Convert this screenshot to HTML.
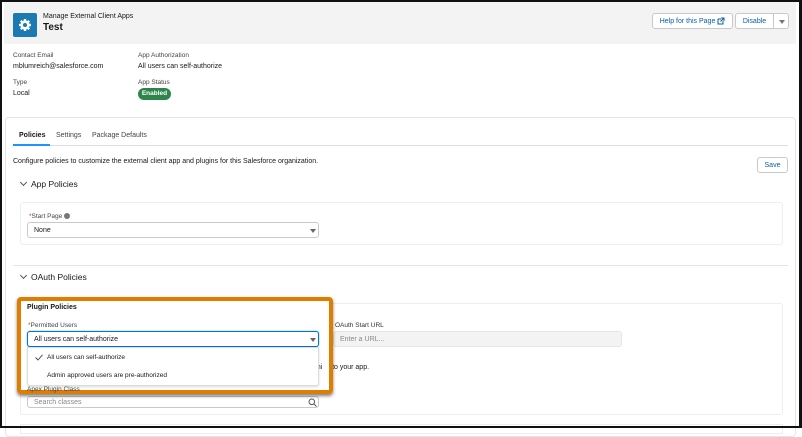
<!DOCTYPE html>
<html><head><style>
*{box-sizing:border-box;margin:0;padding:0}
body{width:802px;height:428px;overflow:hidden;background:#fff;font-family:"Liberation Sans",sans-serif;color:#181818;position:relative}
.a{position:absolute;white-space:nowrap}
.s{font-size:7px}
.lbl{font-size:6.5px;color:#444}
.frame{position:absolute;left:0;top:0;width:802px;height:428px;border:2px solid #111;border-right-width:3px;border-bottom-width:2px;pointer-events:none}
.btn{position:absolute;border:1px solid #c9c9c9;border-radius:3px;background:#fff;color:#0b5cab;font-size:7px;display:flex;align-items:center;justify-content:center}
.inp{position:absolute;border:1px solid #c9c9c9;border-radius:3px;background:#fff;font-size:7px;padding-left:6px;display:flex;align-items:center}
.tri{position:absolute;width:0;height:0;border-left:3px solid transparent;border-right:3px solid transparent;border-top:4px solid #666}
.chev{position:absolute;width:5px;height:5px;border-right:1px solid #555;border-bottom:1px solid #555;transform:rotate(45deg)}
</style></head><body>
<div class="a" style="left:4px;top:0;width:792px;height:44px;background:#f3f3f3"></div>
<div class="a" style="left:13px;top:13px;width:24px;height:24px;background:#1c7ab2;border-radius:2px"></div>
<svg class="a" style="left:17px;top:17px" width="16" height="16" viewBox="0 0 16 16"><g fill="#fff"><circle cx="8" cy="8" r="4.6"/><g stroke="#fff" stroke-width="2.4"><line x1="8" y1="2" x2="8" y2="14"/><line x1="2" y1="8" x2="14" y2="8"/><line x1="3.8" y1="3.8" x2="12.2" y2="12.2"/><line x1="12.2" y1="3.8" x2="3.8" y2="12.2"/></g></g><circle cx="8" cy="8" r="2" fill="#1c7ab2"/></svg>
<div class="a" style="left:43px;top:13px;font-size:7px">Manage External Client Apps</div>
<div class="a" style="left:43px;top:22px;font-size:10px;font-weight:bold">Test</div>
<div class="btn" style="left:652px;top:13px;width:81px;height:16px">Help for this Page&nbsp;<svg width="8" height="8" viewBox="0 0 8 8"><path d="M1 2h3M1 2v5h5V4M4 1h3v3M7 1L3.5 4.5" stroke="#0b5cab" fill="none" stroke-width="1"/></svg></div>
<div class="btn" style="left:735px;top:13px;width:39px;height:16px;border-radius:3px 0 0 3px">Disable</div>
<div class="btn" style="left:773px;top:13px;width:16px;height:16px;border-radius:0 3px 3px 0"><div class="tri" style="left:5px;top:6px;border-top-color:#777"></div></div>
<div class="a lbl" style="left:13px;top:52px">Contact Email</div>
<div class="a s" style="left:13px;top:63px">mblumreich@salesforce.com</div>
<div class="a lbl" style="left:138px;top:52px">App Authorization</div>
<div class="a s" style="left:138px;top:63px">All users can self-authorize</div>
<div class="a lbl" style="left:13px;top:79px">Type</div>
<div class="a s" style="left:13px;top:90px">Local</div>
<div class="a lbl" style="left:138px;top:79px">App Status</div>
<div class="a" style="left:138px;top:88px;width:33px;height:12px;background:#2e844a;border-radius:6px;color:#fff;font-size:6.5px;font-weight:bold;text-align:center;line-height:12px">Enabled</div>
<div class="a" style="left:5px;top:117px;width:791px;height:320px;border:1px solid #e5e5e5;border-radius:4px"></div>
<div class="a s" style="left:19px;top:132px;font-weight:bold">Policies</div>
<div class="a s" style="left:56px;top:132px;color:#444">Settings</div>
<div class="a s" style="left:92px;top:132px;color:#444">Package Defaults</div>
<div class="a" style="left:13px;top:145px;width:775px;height:1px;background:#ddd"></div>
<div class="a" style="left:13px;top:144px;width:37px;height:2px;background:#1b96ff"></div>
<div class="a s" style="left:13px;top:158px">Configure policies to customize the external client app and plugins for this Salesforce organization.</div>
<div class="btn" style="left:757px;top:157px;width:31px;height:16px">Save</div>
<div class="chev" style="left:21px;top:180px"></div>
<div class="a" style="left:31px;top:179px;font-size:8.5px">App Policies</div>
<div class="a" style="left:20px;top:202px;width:763px;height:43px;border:1px solid #eee;border-radius:3px"></div>
<div class="a lbl" style="left:29px;top:213px"><span style="color:#c23934">*</span>Start Page <span style="display:inline-block;width:6px;height:6px;border-radius:50%;background:#777;vertical-align:middle"></span></div>
<div class="inp" style="left:27px;top:222px;width:292px;height:16px">None<div class="tri" style="left:282px;top:6px"></div></div>
<div class="a" style="left:13px;top:265px;width:775px;height:1px;background:#e5e5e5"></div>
<div class="chev" style="left:21px;top:273px"></div>
<div class="a" style="left:31px;top:272px;font-size:8.5px">OAuth Policies</div>
<div class="a" style="left:20px;top:303px;width:763px;height:112px;border:1px solid #eee;border-radius:3px"></div>
<div class="a lbl" style="left:335px;top:322px;color:#333">OAuth Start URL</div>
<div class="inp" style="left:333px;top:331px;width:289px;height:16px;background:#f3f3f3;border-color:#e5e5e5;color:#888">Enter a URL...</div>
<div class="a s" style="left:313px;top:364px">gning to your app.</div>
<div class="a lbl" style="left:27px;top:386px">Apex Plugin Class</div>
<div class="inp" style="left:27px;top:396px;width:292px;height:12px;color:#888">Search classes<svg style="position:absolute;left:280px;top:1px" width="9" height="9" viewBox="0 0 9 9"><circle cx="3.8" cy="3.8" r="2.8" stroke="#555" fill="none"/><line x1="6" y1="6" x2="8.5" y2="8.5" stroke="#555"/></svg></div>
<div class="a" style="left:20px;top:424px;width:763px;height:10px;border:1px solid #eee"></div>
<div class="a" style="left:21px;top:301px;width:308px;height:89px;background:#fff"></div>
<div class="a s" style="left:313px;top:364px">gni</div>
<div class="a" style="left:17px;top:297px;width:316px;height:97px;border:4px solid #e07c00;border-radius:4px;box-shadow:0 2px 3px rgba(0,0,0,.5)"></div>
<div class="a s" style="left:27px;top:304px;font-weight:bold">Plugin Policies</div>
<div class="a lbl" style="left:28px;top:322px"><span style="color:#c23934">*</span>Permitted Users</div>
<div class="inp" style="left:27px;top:331px;width:292px;height:16px;border-color:#0176d3;box-shadow:0 0 1px #0176d3">All users can self-authorize<div class="tri" style="left:282px;top:6px"></div></div>
<div class="a lbl" style="left:27px;top:386px">Apex Plugin Class</div>
<div class="a" style="left:27px;top:347px;width:292px;height:39px;border:1px solid #ddd;border-radius:0 0 3px 3px;background:#fff;box-shadow:0 1px 2px rgba(0,0,0,.15)"></div>
<svg class="a" style="left:35px;top:354px" width="8" height="7" viewBox="0 0 8 7"><path d="M0.5 3.5L3 6L7.5 0.8" stroke="#444" fill="none" stroke-width="0.9"/></svg>
<div class="a" style="left:47px;top:354px;font-size:6.5px">All users can self-authorize</div>
<div class="a" style="left:47px;top:372px;font-size:6.5px">Admin approved users are pre-authorized</div>
<div class="frame"></div>
</body></html>
